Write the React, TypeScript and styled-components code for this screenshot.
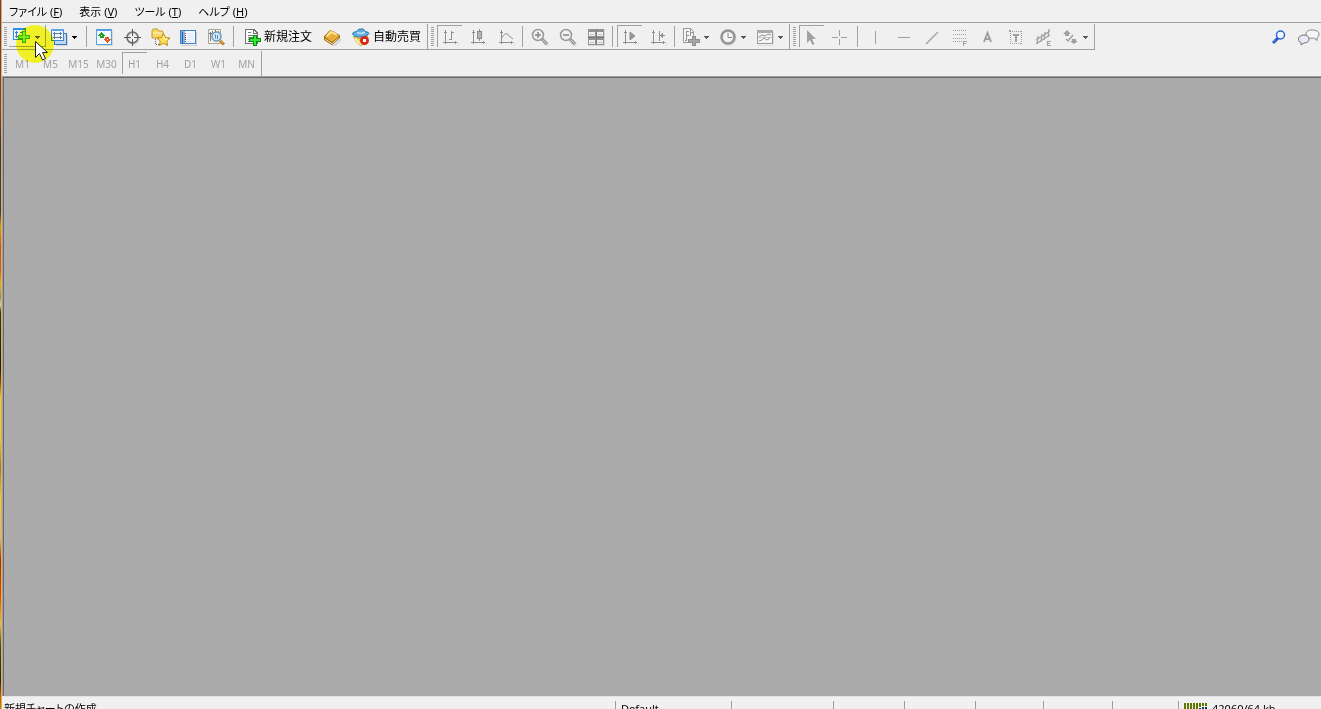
import React from 'react';
import styled, { createGlobalStyle, css } from 'styled-components';

const LINE = '#a0a0a0';
const FACE = '#f0f0f0';
const DIM = '#a0a0a0';

const GlobalStyle = createGlobalStyle`
  *, *::before, *::after { box-sizing: border-box; }
  body {
    margin: 0;
    overflow: hidden;
    background: ${FACE};
    color: #000;
    font-family: "Noto Sans", "Noto Sans CJK JP", sans-serif;
    font-size: 12px;
  }
  button {
    margin: 0;
    padding: 0;
    border: 0;
    background: none;
    color: inherit;
    font: inherit;
  }
`;

const Screen = styled.div`
  display: flex;
  height: 100vh;
  overflow: hidden;
`;

const DesktopEdge = styled.div`
  flex: none;
  width: 2px;
  border-right: 1px solid #e3b04c;
  background: linear-gradient(
    #6b3a5c 0, #7a3d5c 16%, #2f3263 20%, #34386b 30%, #c99a35 32%, #b4504c 35%, #c05a50 38%,
    #d8b040 40%, #6f8f9a 42%, #cfd8d8 43%, #2b3440 44%, #16181e 52%, #8a4a20 54%, #d8cc60 56%,
    #d6c860 62%, #8a7a50 66%, #d8cc60 70%, #c9b8a0 76%, #a03010 79%, #d04a10 84%, #d8c070 88%,
    #3b4a3c 91%, #20242c 96%, #b05a18 98%, #c88020 100%
  );
`;

const Window = styled.main`
  display: flex;
  flex: 1;
  flex-direction: column;
  min-width: 0;
`;

const MenuBar = styled.nav`
  display: flex;
  align-items: center;
  gap: 17px;
  height: 23px;
  padding: 2px 0 0 7px;
  border-bottom: 1px solid ${LINE};
`;

const MenuItem = styled.button`
  font-size: 11px;
  line-height: 20px;
  font-feature-settings: "palt";
  white-space: nowrap;
`;

const ToolRow = styled.div`
  display: flex;
  justify-content: space-between;
  height: 27px;
`;

const ToolBands = styled.div`
  display: flex;
  border-bottom: 1px solid ${LINE};
`;

const Band = styled.div<{ $first?: boolean }>`
  display: flex;
  flex: none;
  margin-top: 1px;
  padding: 1px 0 0 ${p => (p.$first ? 2 : 3)}px;
  border-right: 1px solid ${LINE};
`;

const Grip = styled.div`
  flex: none;
  width: 3px;
  height: 19px;
  margin: 2px 2px 0 0;
  background: repeating-linear-gradient(${LINE} 0 1px, transparent 1px 2px);
`;

const Divider = styled.div<{ $wide?: boolean }>`
  flex: none;
  width: 1px;
  height: 21px;
  margin: 1px 3px 0 ${p => (p.$wide ? 3 : 2)}px;
  background: ${LINE};
`;

const pressed = css`
  box-shadow: inset 1px 1px 0 ${LINE};
`;

const IconButton = styled.button<{ $pressed?: boolean }>`
  flex: none;
  width: 25px;
  height: 22px;
  margin: 0 2px 0 1px;
  padding: 3px 0 1px 4px;
  ${p => p.$pressed && pressed}
  svg { display: block; }
`;

const DropButton = styled.button<{ $hot?: boolean }>`
  display: flex;
  flex: none;
  align-items: flex-start;
  gap: 4px;
  width: 37px;
  height: 22px;
  padding: 3px 0 1px 4px;
  ${p => p.$hot && css`box-shadow: inset -1px -1px 0 ${LINE};`}
`;

const DropArrow = styled.svg`
  flex: none;
  margin-top: 8px;
`;

const LabelButton = styled.button`
  display: flex;
  flex: none;
  align-items: flex-start;
  gap: 3px;
  height: 22px;
  padding: 0 6px;
  font-family: "Noto Sans CJK JP", sans-serif;
  font-size: 12px;
  line-height: 22px;
  white-space: nowrap;
  svg { margin-top: 3px; }
`;

const RightTools = styled.div`
  display: flex;
  align-items: center;
  gap: 12px;
  padding: 3px 1px 0 0;
`;

const RightButton = styled.button`
  height: 18px;
  svg { display: block; }
`;

const PeriodButton = styled.button<{ $pressed?: boolean }>`
  flex: none;
  width: 25px;
  height: 22px;
  margin: 0 2px 0 1px;
  padding-top: 2px;
  color: ${DIM};
  font-family: "Noto Sans", sans-serif;
  font-size: 10px;
  line-height: 20px;
  text-align: center;
  white-space: nowrap;
  ${p => p.$pressed && pressed}
`;

const Workspace = styled.section`
  flex: 1;
  margin-left: 1px;
  border-top: 1px solid #696969;
  border-left: 1px solid #696969;
  outline: 1px solid ${LINE};
  background: #ababab;
`;

const StatusBar = styled.footer`
  display: flex;
  flex: none;
  height: 13px;
  padding-top: 4px;
  border-top: 1px solid #e3e3e3;
  overflow: hidden;
  background: ${FACE};
  z-index: 1;
`;

const StatusHint = styled.div`
  flex: 1;
  padding-left: 2px;
  font-size: 11px;
  font-feature-settings: "palt";
  line-height: 16px;
  white-space: nowrap;
`;

const StatusCell = styled.div<{ $width: number }>`
  display: flex;
  flex: none;
  gap: 4px;
  width: ${p => p.$width}px;
  height: 18px;
  padding-left: 5px;
  border-left: 1px solid ${LINE};
  font-size: 11px;
  line-height: 16px;
  white-space: nowrap;
`;

const Spotlight = styled.div`
  position: absolute;
  top: 25px;
  left: 16px;
  width: 38px;
  height: 38px;
  border-radius: 50%;
  background: #ffff2a;
  mix-blend-mode: multiply;
  pointer-events: none;
`;

const Pointer = styled.svg`
  position: absolute;
  top: 41px;
  left: 35px;
  pointer-events: none;
`;

const Icon = ({ children, soft, width = 18 }: { children: React.ReactNode; soft?: boolean; width?: number }) => (
  <svg width={width} height="18" viewBox={`0 0 ${width} 18`} fill="none" shapeRendering={soft ? 'auto' : 'crispEdges'} aria-hidden="true">
    {children}
  </svg>
);

const Arrow = ({ color = '#000' }: { color?: string }) => (
  <DropArrow width="5" height="3" viewBox="0 0 5 3" shapeRendering="crispEdges" aria-hidden="true">
    <path d="M0 0h5v1h-1v1h-1v1h-1v-1h-1v-1h-1z" fill={color} />
  </DropArrow>
);

const Axes = () => (
  <>
    <path d="M17 14v4H5M8 14h9" stroke="#e2e2e2" />
    <path d="M4.500 2v14M2 14.500h14M3 4.500h3M14.500 13v3" stroke="#8f8f8f" />
  </>
);

const NewChartIcon = () => (
  <Icon>
    <rect x="0" y="0" width="13" height="12" fill="#2f8ff0" />
    <rect x="1" y="2" width="11" height="9" fill="#eef6ff" />
    <path d="M3.500 3v7M2 4.500h3M2 8.500h3M7 4.500h3" stroke="#3a80c8" />
    <path d="M9 3h4v4h4v4h-4v4H9v-4H5V7h4z" fill="#3fae1c" />
    <path d="M10 4h2v4h4v2h-4v4h-2v-4H6V8h4z" fill="#7cf03c" />
  </Icon>
);

const ProfilesIcon = () => (
  <Icon>
    <path d="M6 17.500h12M17.500 7v11" stroke="#d5d5d5" />
    <rect x="4.500" y="5.500" width="12" height="11" fill="#bcd8f2" stroke="#3c78b8" />
    <rect x="1.500" y="1.500" width="12" height="11" fill="#eef6ff" stroke="#3f86cc" />
    <path d="M1 2h13" stroke="#5fa4e4" strokeWidth="2" />
    <path d="M4.500 4v7M3 9.500h9M10.500 8v3M3 5.500h9M10.500 4v3" stroke="#5c7da0" />
  </Icon>
);

const MarketIcon = () => (
  <Icon>
    <path d="M2 17.500h16M17.500 3v15" stroke="#d5d5d5" />
    <rect x="1" y="1" width="16" height="16" fill="#5c9fdf" />
    <rect x="2" y="3" width="14" height="13" fill="#f6faff" />
    <path d="M6.500 4l4 4h-2v2h-4V8h-2z" fill="#22a02c" />
    <path d="M12 15l-4-4h2V9h4v2h2z" fill="#e05a28" />
    <path d="M6 7h1v1H6zM12 11h1v1h-1z" fill="#fff" />
  </Icon>
);

const CrosshairIcon = () => (
  <Icon soft>
    <circle cx="10" cy="10.500" r="5.500" stroke="#dadada" strokeWidth="2" />
    <circle cx="9.500" cy="9.500" r="5.500" stroke="#6e6e6e" strokeWidth="1.500" />
    <path d="M9.500 1v7M9.500 11v7M1 9.500h7M11 9.500h7" stroke="#555" />
  </Icon>
);

const NavigatorIcon = () => (
  <Icon soft width={20}>
    <path d="M1 3q0-2 2-2h3q1 0 2 2h3q1 0 1 1v6H1z" fill="#f6d76a" stroke="#c89a28" />
    <path d="M2 5h9" stroke="#fff3b8" />
    <path d="M4.500 11v6M5 16.500h4" stroke="#666" strokeDasharray="1 1" />
    <path d="M12.500 5.500l2 4 4.500.5-3.300 3 1 4.500-4.200-2.200-4.200 2.200 1-4.500L6 10l4.500-.5z" fill="#ffdf55" stroke="#bf8a1c" />
    <path d="M12.500 8l1 3 3 .3" stroke="#fff6c0" />
  </Icon>
);

const TerminalIcon = () => (
  <Icon>
    <path d="M2 17.500h16M17.500 4v14" stroke="#d0d0d0" />
    <rect x="1" y="2" width="16" height="14" fill="#3f80c4" />
    <rect x="2" y="3" width="4" height="12" fill="#7cb2e6" />
    <rect x="6" y="3" width="10" height="12" fill="#fafcff" />
    <path d="M3 4h1v11H3z" fill="#2b5f9c" />
    <path d="M6 5h1v1H6zM6 7h1v1H6z" fill="#d33" />
    <path d="M6 9h1v1H6zM6 11h1v1H6zM6 13h1v1H6z" fill="#333" />
    <path d="M8 5.500h7M8 7.500h7M8 9.500h7M8 11.500h7M8 13.500h7" stroke="#dce8f6" />
  </Icon>
);

const TesterIcon = () => (
  <Icon soft>
    <path d="M1.500 1.500h12v14h-12z" fill="#f4f2ea" stroke="#aaa690" />
    <path d="M3.500 4v9M5.500 3v4M8.500 2v3M11.500 3v3M2 5.500h3" stroke="#777" />
    <circle cx="9.500" cy="8.500" r="4.500" fill="#cfe5f8" fillOpacity=".9" stroke="#6a9cc8" strokeWidth="1.500" />
    <path d="M8.500 6.500v4M10.500 7v4" stroke="#5d86ac" />
    <path d="M13 12.500l4 4" stroke="#b87820" strokeWidth="3" />
    <path d="M13 12l3.500 3.500" stroke="#f2c25c" />
  </Icon>
);

const OrderIcon = () => (
  <Icon>
    <path d="M3 1.500h8l3 3v11H2.500v-14z" fill="#fff" stroke="#707070" />
    <path d="M10.500 2v3h3" stroke="#707070" />
    <path d="M5 4.500h3M5 7.500h6M5 9.500h6M5 11.500h3M5 13.500h2" stroke="#777" />
    <path d="M10 7h4v3h4v4h-4v4h-4v-4H6v-4h4z" fill="#0a8a14" />
    <path d="M11 8h2v3h4v2h-4v4h-2v-4H7v-2h4z" fill="#38e838" />
  </Icon>
);

const BookIcon = () => (
  <Icon soft>
    <path d="M3 12l8 6 7-7" stroke="#d5d5d5" strokeWidth="2" />
    <path d="M1 9v3l8 5 8-7V8z" fill="#a86a10" />
    <path d="M2 11l7 4.500 7-6" stroke="#fff0b8" />
    <path d="M1 9l6-6.500q4 1 10 5.500l-8 6.500q-4-3-8-5.500z" fill="#e8b038" stroke="#a06b14" />
    <path d="M4 8l4-4q3 1 6 3" stroke="#ffe590" strokeWidth="2" />
  </Icon>
);

const ExpertIcon = () => (
  <Icon soft>
    <path d="M1.500 8.500q7 4 14-1l-2 7-5 3q-5-3-7-9z" fill="#f2cf50" stroke="#c79a2c" />
    <path d="M3 10q3 5 6 6" stroke="#fff2b0" strokeWidth="2" />
    <path d="M.5 6q0-2 4-2.500Q6 .5 9 1q3-1 4 2.500 4 .5 4 2-3 4-9 3.500Q2 9 .5 6z" fill="#62aee0" stroke="#2c78b0" />
    <path d="M5 4.500q4 2 8-.5" stroke="#bde2fa" strokeWidth="1.500" />
    <circle cx="12.500" cy="12.500" r="4.500" fill="#d82a18" />
    <rect x="11" y="11" width="3" height="3" fill="#fff" />
  </Icon>
);

const BarIcon = () => (
  <Icon><Axes /><path d="M10.500 3v9M8 11.500h3M10 4.500h3" stroke="#8f8f8f" /></Icon>
);
const CandleIcon = () => (
  <Icon><Axes /><path d="M10.500 1v12" stroke="#8f8f8f" /><rect x="8.500" y="3.500" width="4" height="7" fill="#b4b4b4" stroke="#8a8a8a" /></Icon>
);
const LineIcon = () => (
  <Icon><Axes /><path d="M4 11q5-9 8-3l4 3" stroke="#929292" shapeRendering="auto" /></Icon>
);
const ZoomIcon = ({ plus }: { plus?: boolean }) => (
  <Icon soft>
    <path d="M12 13l5 5" stroke="#dedede" strokeWidth="4" />
    <circle cx="7" cy="7" r="5.500" fill="#f1f1f1" stroke="#999" strokeWidth="1.500" />
    <path d={plus ? 'M4 7h6M7 4v6' : 'M4 7h6'} stroke="#858585" strokeWidth="1.500" />
    <path d="M11 11l5 5" stroke="#8f8f8f" strokeWidth="3" />
    <path d="M11.500 11.500l4 4" stroke="#ddd" />
  </Icon>
);
const TileIcon = () => (
  <Icon>
    <rect x="1" y="1" width="17" height="17" fill="#d8d8d8" />
    <rect x="1" y="1" width="16" height="16" fill="#929292" />
    <path d="M2 4h6v4H2zM10 4h6v4h-6zM2 12h6v4H2zM10 12h6v4h-6z" fill="#f0f0f0" />
    <path d="M3 6.500h4M11 6.500h4M3 14.500h4M11 14.500h4" stroke="#c0c0c0" />
    <path d="M9 1v16M1 9h16" stroke="#7c7c7c" />
  </Icon>
);
const ScrollIcon = () => (
  <Icon><Axes /><path d="M9 4l5 4-5 4z" fill="#999" stroke="#8f8f8f" shapeRendering="auto" /></Icon>
);
const ShiftIcon = () => (
  <Icon><Axes /><path d="M10.500 3v10M11 7.500h5M13.500 5v5M12.500 6v3" stroke="#8f8f8f" /></Icon>
);
const IndicatorIcon = () => (
  <Icon>
    <path d="M1.500 .500h7l3 3v11h-10z" fill="#f5f5f5" stroke="#999" />
    <path d="M8.500 1v3h3" stroke="#999" />
    <path d="M4.500 4v9M3 12.500h2M4 3.500h3M4 7.500h3M8.500 5v3" stroke="#929292" />
    <path d="M10 8h4v3h4v4h-4v3h-4v-3H6v-4h4z" fill="#8f8f8f" />
    <path d="M11 9h2v3h4v2h-4v3h-2v-3H7v-2h4z" fill="#a6a6a6" />
  </Icon>
);
const ClockIcon = () => (
  <Icon soft>
    <circle cx="9.500" cy="10" r="8" fill="#ddd" />
    <circle cx="9" cy="9" r="6.500" fill="#f4f4f4" stroke="#959595" strokeWidth="2.500" />
    <path d="M9 5v4.500h4" stroke="#8a8a8a" />
    <path d="M9 3.500v1M9 13.500v1M3.500 9h1M13.500 9h1" stroke="#aaa" />
  </Icon>
);
const TemplateIcon = () => (
  <Icon>
    <path d="M2 17.500h16M17.500 4v14" stroke="#ddd" />
    <rect x="1.500" y="2.500" width="15" height="13" fill="#f5f5f5" stroke="#999" />
    <path d="M1 3.500h16" stroke="#aaa" strokeWidth="3" />
    <path d="M3 8.500l3-1.500 3 1 3-2 3 1M3 13l3-1 2-2 3 2 3-2" stroke="#929292" shapeRendering="auto" />
    <path d="M2 9.500h14" stroke="#c8c8c8" />
  </Icon>
);

const CursorIcon = () => <Icon soft><path d="M4 2v13l3-3 2.500 5 2-1-2.500-5h4z" fill={DIM} /></Icon>;
const CrossIcon = () => <Icon><path d="M8.500 2v6M8.500 11v6M1 9.500h6M10 9.500h6" stroke={DIM} /></Icon>;
const VLineIcon = () => <Icon><path d="M9.500 3v13" stroke={DIM} /></Icon>;
const HLineIcon = () => <Icon><path d="M4 9.500h12" stroke={DIM} /></Icon>;
const TrendIcon = () => <Icon soft><path d="M4 16L16 4" stroke={DIM} strokeWidth="1.200" /></Icon>;
const FiboIcon = () => (
  <Icon>
    <path d="M3 2.500h14M3 6.500h14M3 10.500h14M3 13.500h9" stroke={DIM} strokeDasharray="1 1" />
    <path d="M13.500 13v5M13 13.500h4M13 15.500h3" stroke={DIM} />
  </Icon>
);
const TextIcon = () => <Icon soft><path d="M6 14l3.500-9L13 14M7 11h5" stroke={DIM} strokeWidth="2" /></Icon>;
const LabelIcon = () => (
  <Icon>
    <path d="M4 3.500h12M4 15.500h12M4.500 3v13M15.500 3v13" stroke={DIM} strokeDasharray="1 1" />
    <path d="M7 7h6M10 6v8" stroke={DIM} strokeWidth="2" />
    <path d="M3 2h2v2H3z" fill={DIM} />
  </Icon>
);
const ChannelIcon = () => (
  <Icon soft>
    <path d="M2 12L16 3M2 16L16 7M4 8l-1 8M8 6L7 14M11 4l-1 8M15 1l-1 8" stroke={DIM} strokeWidth="1.200" />
    <path d="M13.500 13v5M13 13.500h4M13 15.500h3M13 17.500h4" stroke={DIM} />
  </Icon>
);
const ShapesIcon = () => (
  <Icon soft>
    <path d="M6 2l4 4H8v2H4V6H2zM13 16l-4-3h2v-2h4v2h2z" fill={DIM} />
    <path d="M5 11l2 2 5-6" stroke={DIM} strokeWidth="1.500" />
  </Icon>
);

const SearchIcon = () => (
  <Icon soft width={15}>
    <path d="M2 14l5-5" stroke="#1d4fc0" strokeWidth="3" />
    <path d="M2 13.500l3-3" stroke="#7ea6f4" />
    <circle cx="9.500" cy="6" r="4" fill="#f6f9ff" stroke="#2c62d4" strokeWidth="1.500" />
  </Icon>
);
const ChatIcon = () => (
  <Icon soft width={22}>
    <path d="M14 1c4 0 7 1.500 7 4s-1 3-2 3.500v3L16 9c-5 1-8-1-8-4s3-4 6-4z" fill="#f5f5fa" stroke="#888" />
    <path d="M6 6c3 0 5 1.500 5 4s-2 4-5 4l-3 2v-2.500C1 13 .500 11.500.500 10c0-2.500 2.500-4 5.500-4z" fill="#e8e9f7" stroke="#777" />
  </Icon>
);

const Traffic = () => (
  <svg width="24" height="12" viewBox="0 0 24 12" shapeRendering="crispEdges" aria-hidden="true">
    <path d="M0 2h2v10H0zM3 2h2v10H3zM6 2h2v10H6zM9 2h2v10H9zM12 2h2v7h-2zM15 2h2v4h-2zM18 2h2v3h-2zM21 2h2v3h-2z" fill="#5c7800" />
    <path d="M12 10h2v2h-2zM15 7h2v5h-2zM18 6h2v6h-2zM21 6h2v6h-2z" fill="#123c5c" />
  </svg>
);

const MENUS = [
  ['ファイル', 'F'],
  ['表示', 'V'],
  ['ツール', 'T'],
  ['ヘルプ', 'H'],
];

const PERIODS = ['M1', 'M5', 'M15', 'M30', 'H1', 'H4', 'D1', 'W1', 'MN'];

const STATUS_GAPS = [102, 71, 71, 68, 69, 66];

const tool = (label: string, icon: React.ReactNode, on = false) => (
  <IconButton key={label} type="button" aria-label={label} $pressed={on}>{icon}</IconButton>
);

const drop = (label: string, icon: React.ReactNode, color?: string, hot = false) => (
  <DropButton key={label} type="button" aria-label={label} $hot={hot}>{icon}<Arrow color={color} /></DropButton>
);

export default function App() {
  return (
    <Screen>
      <GlobalStyle />
      <DesktopEdge />
      <Window>
        <MenuBar>
          {MENUS.map(([name, key]) => (
            <MenuItem key={key} type="button">{name} (<u>{key}</u>)</MenuItem>
          ))}
        </MenuBar>
        <ToolRow>
          <ToolBands>
            <Band $first>
              <Grip />
              {drop('新規チャート', <NewChartIcon />, '#555', true)}
              {drop('チャートの組表示', <ProfilesIcon />)}
              <Divider $wide />
              {tool('気配値表示', <MarketIcon />)}
              {tool('データウィンドウ', <CrosshairIcon />)}
              {tool('ナビゲーター', <NavigatorIcon />)}
              {tool('ターミナル', <TerminalIcon />)}
              {tool('ストラテジーテスター', <TesterIcon />)}
              <Divider $wide />
              <LabelButton type="button"><OrderIcon />新規注文</LabelButton>
              {tool('メタエディター', <BookIcon />)}
              <LabelButton type="button"><ExpertIcon />自動売買</LabelButton>
            </Band>
            <Band>
              <Grip />
              {tool('バーチャート', <BarIcon />, true)}
              {tool('ローソク足', <CandleIcon />)}
              {tool('ラインチャート', <LineIcon />)}
              <Divider />
              {tool('拡大', <ZoomIcon plus />)}
              {tool('縮小', <ZoomIcon />)}
              {tool('整列', <TileIcon />)}
              <Divider />
              {tool('自動スクロール', <ScrollIcon />, true)}
              {tool('チャートシフト', <ShiftIcon />)}
              <Divider />
              {drop('インディケータ', <IndicatorIcon />, '#555')}
              {drop('時間足設定', <ClockIcon />, '#555')}
              {drop('定型チャート', <TemplateIcon />, '#555')}
            </Band>
            <Band>
              <Grip />
              {tool('カーソル', <CursorIcon />, true)}
              {tool('クロスヘア', <CrossIcon />)}
              <Divider $wide />
              {tool('垂直線', <VLineIcon />)}
              {tool('水平線', <HLineIcon />)}
              {tool('トレンドライン', <TrendIcon />)}
              {tool('フィボナッチ', <FiboIcon />)}
              {tool('テキスト', <TextIcon />)}
              {tool('テキストラベル', <LabelIcon />)}
              {tool('チャネル', <ChannelIcon />)}
              {drop('図形', <ShapesIcon />, '#555')}
            </Band>
          </ToolBands>
          <RightTools>
            <RightButton type="button" aria-label="検索"><SearchIcon /></RightButton>
            <RightButton type="button" aria-label="チャット"><ChatIcon /></RightButton>
          </RightTools>
        </ToolRow>
        <ToolRow>
          <Band $first>
            <Grip />
            {PERIODS.map(p => (
              <PeriodButton key={p} type="button" $pressed={p === 'H1'}>{p}</PeriodButton>
            ))}
          </Band>
        </ToolRow>
        <Workspace />
        <StatusBar>
          <StatusHint>新規チャートの作成</StatusHint>
          <StatusCell $width={116}>Default</StatusCell>
          {STATUS_GAPS.map((w, i) => <StatusCell key={i} $width={w} />)}
          <StatusCell $width={143}><Traffic />42060/64 kb</StatusCell>
        </StatusBar>
      </Window>
      <Spotlight />
      <Pointer width="13" height="20" viewBox="0 0 13 20" aria-hidden="true">
        <path d="M.5.500v16l4-4 3 6.500 3-1.500-3-6h5z" fill="#fff" stroke="#222" />
      </Pointer>
    </Screen>
  );
}
